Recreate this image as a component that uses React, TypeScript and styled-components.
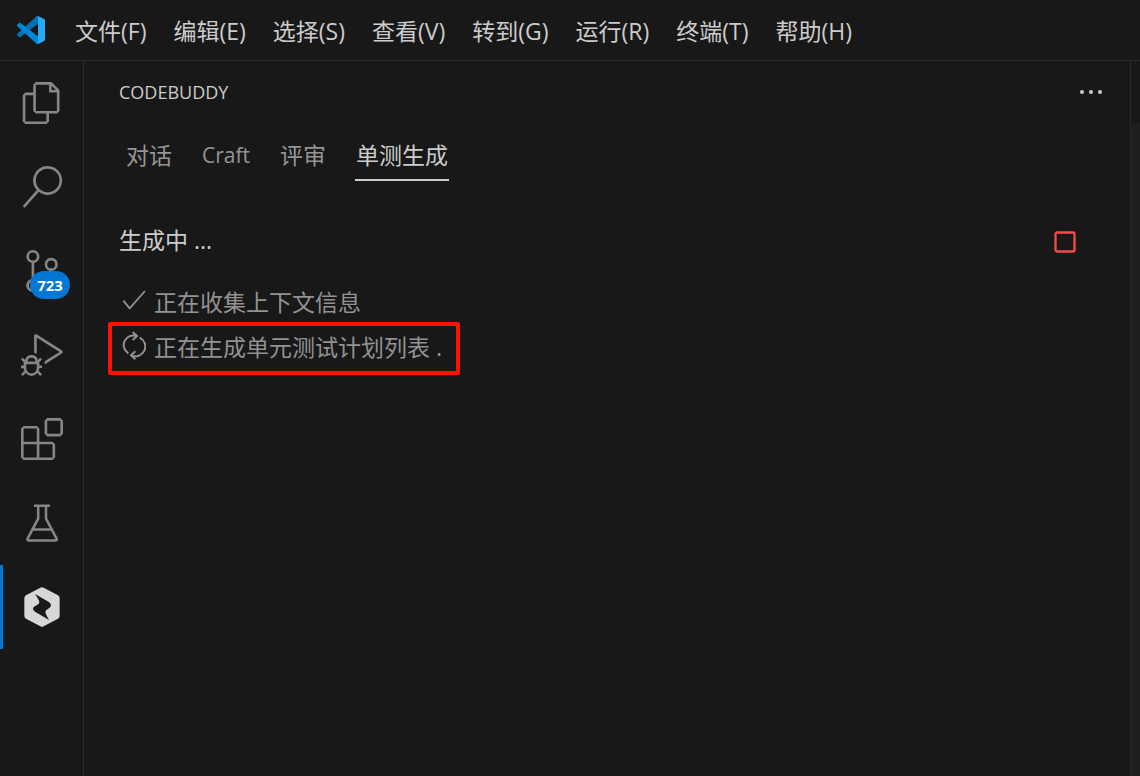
import React from 'react';
import styled, { createGlobalStyle, css } from 'styled-components';

const GlobalStyle = createGlobalStyle`
  *, *::before, *::after { box-sizing: border-box; }
  body {
    margin: 0;
    background: #181818;
    color: #cccccc;
    font-family: 'Open Sans', 'Noto Sans CJK SC', sans-serif;
    font-size: 23px;
    line-height: 34px;
  }
  button {
    margin: 0;
    padding: 0;
    border: 0;
    background: none;
    color: inherit;
    font: inherit;
    cursor: pointer;
  }
  svg { display: block; flex: none; }
`;

const Window = styled.div`
  display: flex;
  flex-direction: column;
  min-height: 100vh;
`;

const TitleBar = styled.header`
  display: flex;
  align-items: center;
  gap: 30px;
  height: 61px;
  padding-left: 17px;
  border-bottom: 1px solid #2b2b2b;
`;

const MenuBar = styled.nav`
  display: flex;
  gap: 27px;
  padding-top: 2px;
`;

const MenuItem = styled.button`
  white-space: nowrap;
`;

const Workbench = styled.div`
  display: flex;
  flex: 1;
`;

const ActivityBar = styled.nav`
  display: flex;
  flex-direction: column;
  flex: none;
  width: 84px;
  border-right: 1px solid #2b2b2b;
`;

const ActivityItem = styled.button<{ $active?: boolean }>`
  position: relative;
  display: flex;
  align-items: center;
  justify-content: center;
  height: 84px;
  color: ${(p) => (p.$active ? '#d7d7d7' : '#868686')};
  ${(p) =>
    p.$active &&
    css`
      &::before {
        content: '';
        position: absolute;
        inset: 0 auto 0 0;
        width: 3px;
        background: #0078d4;
      }
    `}
`;

const Badge = styled.span`
  position: absolute;
  left: 30px;
  top: 42px;
  width: 40px;
  height: 28px;
  border-radius: 14px;
  background: #0078d4;
  color: #ffffff;
  font-size: 15px;
  font-weight: 700;
  line-height: 28px;
  text-align: center;
`;

const Sidebar = styled.main`
  flex: 1;
  min-width: 0;
  padding: 0 26px 0 35px;
`;

const PanelHeader = styled.div`
  display: flex;
  align-items: center;
  justify-content: space-between;
  height: 62px;
`;

const PanelTitle = styled.h2`
  margin: 0;
  font-size: 18px;
  font-weight: 400;
`;

const Tabs = styled.div`
  display: flex;
  gap: 28px;
  margin-top: 14px;
  padding-left: 6px;
`;

const Tab = styled.button<{ $active?: boolean }>`
  padding: 0 1px 7px;
  border-bottom: 2px solid ${(p) => (p.$active ? '#cccccc' : 'transparent')};
  color: ${(p) => (p.$active ? '#cccccc' : '#959595')};
`;

const Latin = styled.span`
  font-size: 21px;
`;

const StatusRow = styled.div`
  display: flex;
  align-items: center;
  justify-content: space-between;
  margin-top: 42px;
  padding-right: 28px;
`;

const StopButton = styled.button`
  padding-top: 4px;
  color: #f84b48;
`;

const Steps = styled.ul`
  display: flex;
  flex-direction: column;
  align-items: flex-start;
  margin: 22px 0 0;
  padding: 0 0 0 3px;
  list-style: none;
`;

const Step = styled.li<{ $highlighted?: boolean }>`
  position: relative;
  display: flex;
  align-items: center;
  gap: 8px;
  height: 45px;
  color: #929292;
  white-space: nowrap;
  ${(p) =>
    p.$highlighted &&
    css`
      &::after {
        content: '';
        position: absolute;
        inset: -2px -18px -6px -14px;
        border: 4px solid #fe1100;
        border-radius: 2px;
      }
    `}
`;

const Editor = styled.aside`
  flex: none;
  width: 10px;
  border-left: 1px solid #2b2b2b;
  background: #1f1f1f;
`;

const EditorTabStrip = styled.div`
  height: 62px;
  background: #181818;
`;

const Glyph = ({ d }: { d: string }) => (
  <svg width="42" height="42" viewBox="0 0 24 24" fill="currentColor" aria-hidden="true">
    <path fillRule="evenodd" clipRule="evenodd" d={d} />
  </svg>
);

const FILES =
  'M17.5 0h-9L7 1.5V6H2.5L1 7.5v15.07L2.5 24h12.07L16 22.57V18h4.7l1.3-1.43V4.5L17.5 0zm0 2.12l2.38 2.38H17.5V2.12zm-3 20.38h-12v-15H7v9.07L8.5 18h6v4.5zm6-6h-12v-15H16V6h4.5v10.5z';
const SEARCH =
  'M15.25 0a8.25 8.25 0 0 0-6.18 13.72L1 22.88l1.12 1 8.05-9.12A8.251 8.251 0 1 0 15.25.01V0zm0 15a6.75 6.75 0 1 1 0-13.5 6.75 6.75 0 0 1 0 13.5z';
const SOURCE_CONTROL =
  'M21.007 8.222A3.738 3.738 0 0 0 15.045 5.2a3.737 3.737 0 0 0 1.156 6.583 2.988 2.988 0 0 1-2.668 1.67h-2.99a4.456 4.456 0 0 0-2.989 1.165V7.4a3.737 3.737 0 1 0-1.494 0v9.117a3.776 3.776 0 1 0 1.816.099 2.99 2.99 0 0 1 2.668-1.667h2.99a4.484 4.484 0 0 0 4.223-3.039 3.736 3.736 0 0 0 3.25-3.687zM4.565 3.738a2.242 2.242 0 1 1 4.484 0 2.242 2.242 0 0 1-4.484 0zm4.484 16.441a2.242 2.242 0 1 1-4.484 0 2.242 2.242 0 0 1 4.484 0zm8.221-9.715a2.242 2.242 0 1 1 0-4.485 2.242 2.242 0 0 1 0 4.485z';
const DEBUG =
  'M10.94 13.5l-1.32 1.32a3.73 3.73 0 0 0-7.24 0L1.06 13.5 0 14.56l1.72 1.72-.22.22V18H0v1.5h1.5v.08c.077.489.214.966.41 1.42L0 22.94 1.06 24l1.65-1.65A4.308 4.308 0 0 0 6 24a4.31 4.31 0 0 0 3.29-1.65L10.94 24 12 22.94 10.09 21c.198-.464.336-.951.41-1.45v-.1H12V18h-1.5v-1.5l-.22-.22L12 14.56l-1.06-1.06zM6 13.5a2.25 2.25 0 0 1 2.25 2.25h-4.5A2.25 2.25 0 0 1 6 13.5zm3 6a3.33 3.33 0 0 1-3 3 3.33 3.33 0 0 1-3-3v-2.25h6v2.25zm14.76-9.9v1.26L13.5 17.37V15.6l8.5-5.37L9 2v9.46a5.07 5.07 0 0 0-1.5-.72V.63L8.64 0l15.12 9.6z';
const EXTENSIONS =
  'M13.5 1.5L15 0h7.5L24 1.5V9l-1.5 1.5H15L13.5 9V1.5zm1.5 0V9h7.5V1.5H15zM0 15V6l1.5-1.5H9L10.5 6v7.5H18l1.5 1.5v7.5L18 24H1.5L0 22.5V15zm9-1.5V6H1.5v7.5H9zM9 15H1.5v7.5H9V15zm1.5 7.5H18V15h-7.5v7.5z';

const Beaker = () => (
  <svg width="42" height="42" viewBox="0 0 42 42" fill="none" stroke="currentColor" strokeWidth="2.5" aria-hidden="true">
    <path d="M13 3.7H29M17.2 4V16.6L6.6 36.6Q6 38.5 7.8 38.5H34.6Q36.4 38.5 35.6 36.6L25 16.6V4M11.5 27.4H30.8" />
  </svg>
);

const BuddyLogo = () => (
  <svg width="42" height="42" viewBox="63 93 126 126" aria-hidden="true">
    <path
      fill="currentColor"
      d="M121 98Q126 95 131 98L174 121Q179 124 179 130V182Q179 188 174 191L131 214Q126 217 121 214L78 191Q73 188 73 182V130Q73 124 78 121Z"
    />
    <path
      fill="#181818"
      d="M105 117L135 134Q153 143 153 150Q153 157 145 161Q136 165 136 171Q136 176 147 195L118 178Q99 168 99 161Q99 155 107 152Q118 147 118 141Q118 136 105 117Z"
    />
  </svg>
);

const CodeLogo = () => (
  <svg width="28" height="28" viewBox="0 0 100 100" aria-hidden="true">
    <path
      fill="#0073b7"
      d="M96.46 10.8L75.86.88C73.47-.27 70.62.21 68.75 2.08L1.3 63.58C-.52 65.24-.51 68.09 1.3 69.75L6.81 74.75C8.3 76.1 10.53 76.2 12.13 74.99L93.36 13.37C96.09 11.3 100 13.25 100 16.67V16.43C100 14.03 98.62 11.84 96.46 10.8Z"
    />
    <path
      fill="#0088d8"
      d="M96.46 89.2L75.86 99.12C73.47 100.27 70.62 99.79 68.75 97.92L1.3 36.42C-.52 34.76-.51 31.91 1.3 30.25L6.81 25.25C8.3 23.9 10.53 23.8 12.13 25.01L93.36 86.63C96.09 88.7 100 86.75 100 83.33V83.57C100 85.97 98.62 88.16 96.46 89.2Z"
    />
    <path
      fill="#27a9f5"
      d="M75.86 99.13C73.47 100.27 70.62 99.79 68.75 97.92C71.06 100.22 75 98.59 75 95.33V4.67C75 1.41 71.06-.22 68.75 2.08C70.62.21 73.47-.27 75.86.87L96.46 10.78C98.62 11.82 100 14.01 100 16.41V83.59C100 85.99 98.62 88.18 96.46 89.22L75.86 99.13Z"
    />
  </svg>
);

const MoreDots = () => (
  <svg width="26" height="26" viewBox="0 0 26 26" fill="currentColor" aria-hidden="true">
    <circle cx="4" cy="13" r="2" />
    <circle cx="13" cy="13" r="2" />
    <circle cx="22" cy="13" r="2" />
  </svg>
);

const StopSquare = () => (
  <svg width="22" height="22" viewBox="0 0 22 22" fill="none" stroke="currentColor" strokeWidth="2.3" aria-hidden="true">
    <rect x="1.5" y="1.5" width="19" height="19" rx="1.5" />
  </svg>
);

const CheckMark = () => (
  <svg width="24" height="32" viewBox="66 198 72 96" fill="none" stroke="currentColor" strokeWidth="5.5" aria-hidden="true">
    <path d="M70 242L89 265L135 213" />
  </svg>
);

const SyncArrows = () => (
  <svg width="24" height="32" viewBox="66 332 72 96" fill="none" stroke="currentColor" strokeWidth="6" aria-hidden="true">
    <path d="M85 399A29 29 0 0 1 110 347M98 335L111 347L98 359M119 352A29 29 0 0 1 94 405M106 393L93 405L106 417" />
  </svg>
);

const MENUS = ['文件(F)', '编辑(E)', '选择(S)', '查看(V)', '转到(G)', '运行(R)', '终端(T)', '帮助(H)'];

export default function App() {
  return (
    <>
      <GlobalStyle />
      <Window>
        <TitleBar>
          <CodeLogo />
          <MenuBar>
            {MENUS.map((label) => (
              <MenuItem key={label}>{label}</MenuItem>
            ))}
          </MenuBar>
        </TitleBar>
        <Workbench>
          <ActivityBar>
            <ActivityItem aria-label="资源管理器">
              <Glyph d={FILES} />
            </ActivityItem>
            <ActivityItem aria-label="搜索">
              <Glyph d={SEARCH} />
            </ActivityItem>
            <ActivityItem aria-label="源代码管理">
              <Glyph d={SOURCE_CONTROL} />
              <Badge>723</Badge>
            </ActivityItem>
            <ActivityItem aria-label="运行和调试">
              <Glyph d={DEBUG} />
            </ActivityItem>
            <ActivityItem aria-label="扩展">
              <Glyph d={EXTENSIONS} />
            </ActivityItem>
            <ActivityItem aria-label="测试">
              <Beaker />
            </ActivityItem>
            <ActivityItem $active aria-label="CodeBuddy">
              <BuddyLogo />
            </ActivityItem>
          </ActivityBar>
          <Sidebar>
            <PanelHeader>
              <PanelTitle>CODEBUDDY</PanelTitle>
              <button aria-label="更多操作">
                <MoreDots />
              </button>
            </PanelHeader>
            <Tabs role="tablist">
              <Tab role="tab">对话</Tab>
              <Tab role="tab">
                <Latin>Craft</Latin>
              </Tab>
              <Tab role="tab">评审</Tab>
              <Tab role="tab" $active aria-selected="true">
                单测生成
              </Tab>
            </Tabs>
            <StatusRow>
              <span>生成中 ...</span>
              <StopButton aria-label="停止">
                <StopSquare />
              </StopButton>
            </StatusRow>
            <Steps>
              <Step>
                <CheckMark />
                正在收集上下文信息
              </Step>
              <Step $highlighted>
                <SyncArrows />
                正在生成单元测试计划列表 .
              </Step>
            </Steps>
          </Sidebar>
          <Editor>
            <EditorTabStrip />
          </Editor>
        </Workbench>
      </Window>
    </>
  );
}
